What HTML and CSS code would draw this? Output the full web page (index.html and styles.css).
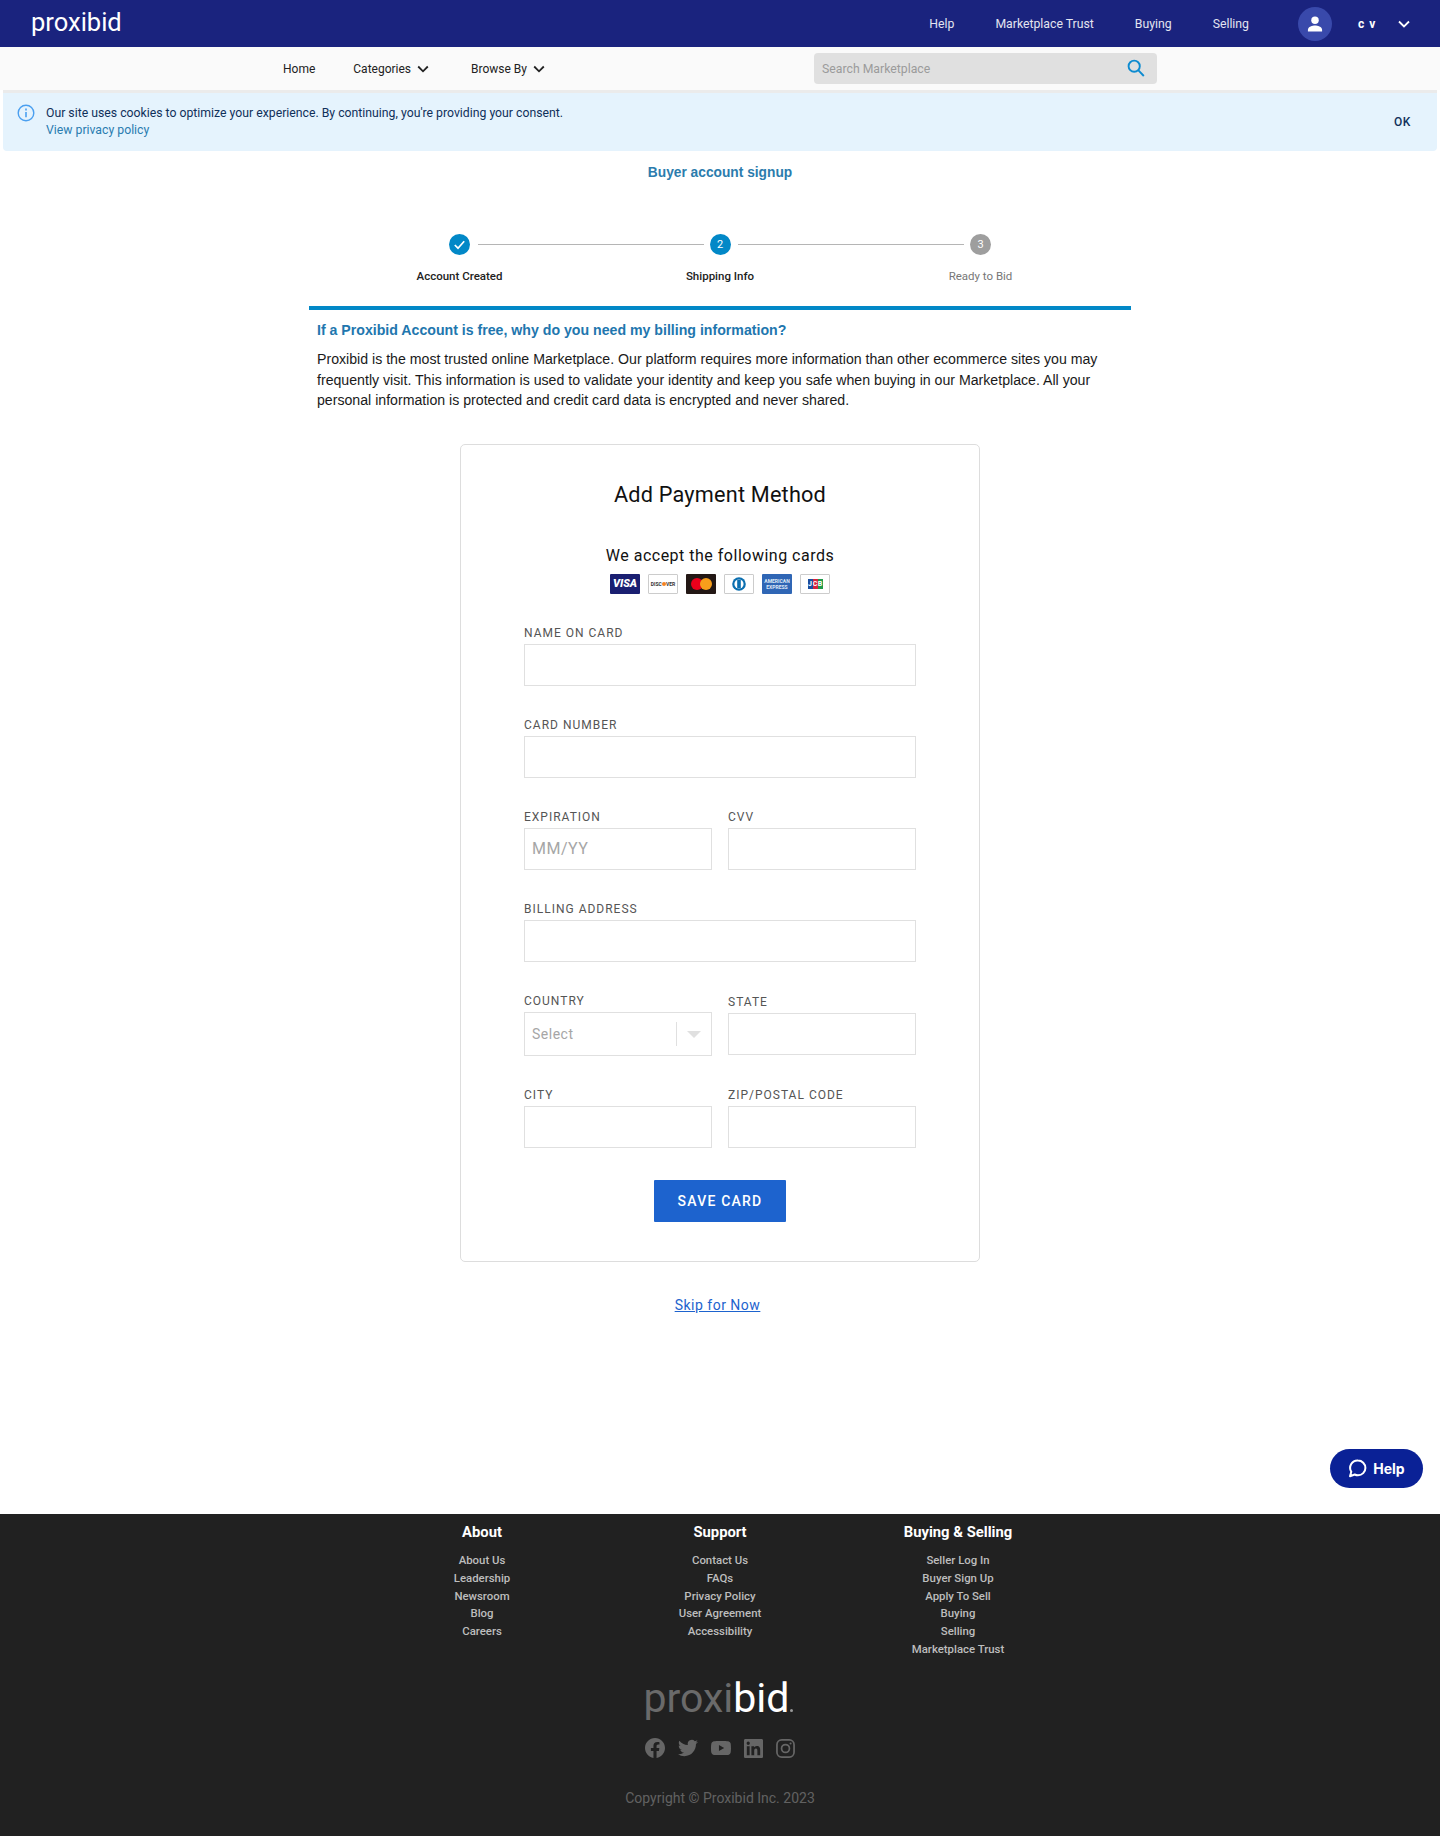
FILE: index.html
```html
<!DOCTYPE html>
<html lang="en">
<head>
  <meta charset="UTF-8">
  <meta name="viewport" content="width=device-width, initial-scale=1.0">
  <title>Proxibid - Add Payment Method</title>
  <link rel="stylesheet" href="styles.css">
</head>
<body>
  <header class="topbar">
    <a class="logo" href="#">proxibid</a>
    <nav class="topnav">
      <a href="#">Help</a>
      <a href="#">Marketplace Trust</a>
      <a href="#">Buying</a>
      <a href="#">Selling</a>
    </nav>
    <div class="account">
      <span class="avatar">
        <svg width="20" height="20" viewBox="0 0 24 24" fill="#fff"><circle cx="12" cy="7.5" r="4.5"/><path d="M3.5 21v-2.2c0-3.4 5.6-5 8.5-5s8.5 1.6 8.5 5V21z"/></svg>
      </span>
      <span class="account-name">c v</span>
      <svg class="account-caret" width="14" height="14" viewBox="0 0 14 14" fill="none" stroke="#fff" stroke-width="1.8"><path d="M2 4.5l5 5 5-5"/></svg>
    </div>
  </header>

  <div class="subnav">
    <a class="home-link" href="#">Home</a>
    <a class="cat-link" href="#">Categories
      <svg width="12" height="12" viewBox="0 0 12 12" fill="none" stroke="#222" stroke-width="1.8"><path d="M1.2 3.5L6 8.3l4.8-4.8"/></svg>
    </a>
    <a class="cat-link" href="#">Browse By
      <svg width="12" height="12" viewBox="0 0 12 12" fill="none" stroke="#222" stroke-width="1.8"><path d="M1.2 3.5L6 8.3l4.8-4.8"/></svg>
    </a>
    <div class="search">
      <input type="text" placeholder="Search Marketplace">
      <svg width="18" height="18" viewBox="0 0 18 18" fill="none" stroke="#0d8bd0" stroke-width="1.9"><circle cx="7.2" cy="7.2" r="5.6"/><path d="M11.2 11.2l5.6 5.8"/></svg>
    </div>
  </div>

  <div class="cookie">
    <svg class="cookie-icon" width="18" height="18" viewBox="0 0 18 18" fill="none" stroke="#4a9ff0" stroke-width="1.4"><circle cx="9" cy="9" r="7.8"/><path d="M9 8v5.2" stroke-width="1.6"/><path d="M9 4.6v1.8" stroke-width="1.6"/></svg>
    <div class="cookie-text">
      <p>Our site uses cookies to optimize your experience. By continuing, you're providing your consent.</p>
      <a href="#">View privacy policy</a>
    </div>
    <button class="cookie-ok">OK</button>
  </div>

  <main class="main">
    <h1 class="signup-title">Buyer account signup</h1>

    <div class="content">
      <div class="steps">
        <div class="step done">
          <span class="dot"><svg width="13" height="13" viewBox="0 0 13 13" fill="none" stroke="#fff" stroke-width="1.7"><path d="M1.8 7l3.2 3.2 6.2-7"/></svg></span>
          <span class="step-label">Account Created</span>
        </div>
        <div class="step active">
          <span class="dot">2</span>
          <span class="step-label">Shipping Info</span>
        </div>
        <div class="step todo">
          <span class="dot">3</span>
          <span class="step-label">Ready to Bid</span>
        </div>
      </div>

      <div class="why">
        <h2>If a Proxibid Account is free, why do you need my billing information?</h2>
        <p>Proxibid is the most trusted online Marketplace. Our platform requires more information than other ecommerce sites you may frequently visit. This information is used to validate your identity and keep you safe when buying in our Marketplace. All your personal information is protected and credit card data is encrypted and never shared.</p>
      </div>
    </div>

    <form class="card">
      <h2 class="card-title">Add Payment Method</h2>
      <p class="accept">We accept the following cards</p>
      <div class="brands">
        <span class="brand visa">VISA</span>
        <span class="brand discover">DISC<i></i>VER</span>
        <span class="brand mc"><i class="red"></i><i class="orange"></i></span>
        <span class="brand diners"><svg width="16" height="14" viewBox="0 0 16 14"><circle cx="8" cy="7" r="6.8" fill="#0b6fb0"/><circle cx="8" cy="7" r="4.6" fill="#fff"/><rect x="6.2" y="2.8" width="3.6" height="8.4" fill="#0b6fb0"/></svg></span>
        <span class="brand amex">AMERICAN<br>EXPRESS</span>
        <span class="brand jcb"><b class="j">J</b><b class="c">C</b><b class="g">B</b></span>
      </div>

      <div class="field">
        <label>NAME ON CARD</label>
        <input type="text">
      </div>
      <div class="field">
        <label>CARD NUMBER</label>
        <input type="text">
      </div>
      <div class="row">
        <div class="field">
          <label>EXPIRATION</label>
          <input type="text" placeholder="MM/YY">
        </div>
        <div class="field">
          <label>CVV</label>
          <input type="text">
        </div>
      </div>
      <div class="field">
        <label>BILLING ADDRESS</label>
        <input type="text">
      </div>
      <div class="row row-center">
        <div class="field">
          <label>COUNTRY</label>
          <div class="select">
            <span class="select-value">Select</span>
            <span class="select-arrow"></span>
          </div>
        </div>
        <div class="field">
          <label>STATE</label>
          <input type="text">
        </div>
      </div>
      <div class="row">
        <div class="field">
          <label>CITY</label>
          <input type="text">
        </div>
        <div class="field">
          <label>ZIP/POSTAL CODE</label>
          <input type="text">
        </div>
      </div>
      <button class="save" type="button">SAVE CARD</button>
    </form>

    <div class="skip"><a href="#">Skip for Now</a></div>

    <button class="help-btn">
      <svg width="19" height="19" viewBox="0 0 19 19" fill="none" stroke="#fff" stroke-width="2"><path d="M10 1.5a7.4 7.4 0 0 1 0 14.8c-1.2 0-2.3-.3-3.3-.8L2 17.2l1.3-4.4A7.4 7.4 0 0 1 10 1.5z" stroke-linejoin="round"/></svg>
      Help
    </button>
  </main>

  <footer class="footer">
    <div class="footer-cols">
      <div class="footer-col">
        <h3>About</h3>
        <a href="#">About Us</a>
        <a href="#">Leadership</a>
        <a href="#">Newsroom</a>
        <a href="#">Blog</a>
        <a href="#">Careers</a>
      </div>
      <div class="footer-col">
        <h3>Support</h3>
        <a href="#">Contact Us</a>
        <a href="#">FAQs</a>
        <a href="#">Privacy Policy</a>
        <a href="#">User Agreement</a>
        <a href="#">Accessibility</a>
      </div>
      <div class="footer-col">
        <h3>Buying &amp; Selling</h3>
        <a href="#">Seller Log In</a>
        <a href="#">Buyer Sign Up</a>
        <a href="#">Apply To Sell</a>
        <a href="#">Buying</a>
        <a href="#">Selling</a>
        <a href="#">Marketplace Trust</a>
      </div>
    </div>
    <div class="footer-logo">proxi<span>bid</span><em></em></div>
    <div class="social">
      <svg width="20" height="20" viewBox="0 0 24 24" fill="#666"><path d="M24 12.073c0-6.627-5.373-12-12-12s-12 5.373-12 12c0 5.99 4.388 10.954 10.125 11.854v-8.385H7.078v-3.47h3.047V9.43c0-3.007 1.792-4.669 4.533-4.669 1.312 0 2.686.235 2.686.235v2.953H15.83c-1.491 0-1.956.925-1.956 1.874v2.25h3.328l-.532 3.47h-2.796v8.385C19.612 23.027 24 18.062 24 12.073z"/></svg>
      <svg width="20" height="20" viewBox="0 0 24 24" fill="#666"><path d="M23.953 4.57a10 10 0 01-2.825.775 4.958 4.958 0 002.163-2.723c-.951.555-2.005.959-3.127 1.184a4.92 4.92 0 00-8.384 4.482C7.69 8.095 4.067 6.13 1.64 3.162a4.822 4.822 0 00-.666 2.475c0 1.71.87 3.213 2.188 4.096a4.904 4.904 0 01-2.228-.616v.06a4.923 4.923 0 003.946 4.827 4.996 4.996 0 01-2.212.085 4.936 4.936 0 004.604 3.417 9.867 9.867 0 01-6.102 2.105c-.39 0-.779-.023-1.17-.067a13.995 13.995 0 007.557 2.209c9.053 0 13.998-7.496 13.998-13.985 0-.21 0-.42-.015-.63A9.935 9.935 0 0024 4.59z"/></svg>
      <svg width="20" height="20" viewBox="0 0 24 24" fill="#666"><path d="M23.498 6.186a3.016 3.016 0 0 0-2.122-2.136C19.505 3.545 12 3.545 12 3.545s-7.505 0-9.377.505A3.017 3.017 0 0 0 .502 6.186C0 8.07 0 12 0 12s0 3.93.502 5.814a3.016 3.016 0 0 0 2.122 2.136c1.871.505 9.376.505 9.376.505s7.505 0 9.377-.505a3.015 3.015 0 0 0 2.122-2.136C24 15.93 24 12 24 12s0-3.93-.502-5.814zM9.545 15.568V8.432L15.818 12l-6.273 3.568z"/></svg>
      <svg width="19" height="19" viewBox="0 0 24 24" fill="#666"><path d="M20.447 20.452h-3.554v-5.569c0-1.328-.027-3.037-1.852-3.037-1.853 0-2.136 1.445-2.136 2.939v5.667H9.351V9h3.414v1.561h.046c.477-.9 1.637-1.85 3.37-1.85 3.601 0 4.267 2.37 4.267 5.455v6.286zM5.337 7.433a2.062 2.062 0 0 1-2.063-2.065 2.064 2.064 0 1 1 2.063 2.065zm1.782 13.019H3.555V9h3.564v11.452zM22.225 0H1.771C.792 0 0 .774 0 1.729v20.542C0 23.227.792 24 1.771 24h20.451C23.2 24 24 23.227 24 22.271V1.729C24 .774 23.2 0 22.222 0h.003z"/></svg>
      <svg width="19" height="19" viewBox="0 0 24 24" fill="none" stroke="#666" stroke-width="2.2"><rect x="1.2" y="1.2" width="21.6" height="21.6" rx="6"/><circle cx="12" cy="12" r="5"/><circle cx="18.4" cy="5.6" r="1.3" fill="#666" stroke="none"/></svg>
    </div>
    <p class="copyright">Copyright &copy; Proxibid Inc. 2023</p>
  </footer>
</body>
</html>
```

FILE: styles.css
```css
* {
  box-sizing: border-box;
}
body {
  margin: 0;
  background: #fff;
  color: #222;
  font-family: Roboto, 'Liberation Sans', Arial, sans-serif;
}
a {
  text-decoration: none;
  color: inherit;
}
.topbar {
  height: 47px;
  background: #1a237e;
  display: flex;
  align-items: center;
  padding-left: 31px;
  color: #fff;
}
.logo {
  font-weight: 400;
  font-size: 25.5px;
  line-height: 47px;
  color: #fff;
  margin-top: -3px;
}
.topnav {
  margin-left: auto;
  display: flex;
  gap: 41px;
  font-size: 12.25px;
  color: #e3e4f0;
}
.account {
  display: flex;
  align-items: center;
  margin-left: 49px;
  width: 142px;
}
.avatar {
  width: 34px;
  height: 34px;
  border-radius: 50%;
  background: #3949ab;
  display: flex;
  align-items: center;
  justify-content: center;
}
.account-name {
  margin-left: 26px;
  font-size: 12px;
  font-weight: 700;
  letter-spacing: 1px;
}
.account-caret {
  margin-left: 21px;
}
.subnav {
  height: 43px;
  background: #fafafa;
  display: flex;
  align-items: center;
  padding: 0 283px;
  font-size: 12px;
  color: #222;
}
.subnav a svg {
  margin-left: 3px;
  vertical-align: -2px;
}
.home-link {
  margin-right: 38px;
}
.cat-link {
  margin-right: 42px;
}
.search {
  position: relative;
  margin-left: auto;
  width: 343px;
  height: 31px;
}
.search input {
  width: 100%;
  height: 100%;
  border: none;
  border-radius: 4px;
  background: #e0e0e0;
  padding: 0 8px;
  font-family: inherit;
  font-size: 12.25px;
}
.search input::placeholder {
  color: #9b9b9b;
}
.search svg {
  position: absolute;
  right: 12px;
  top: 6px;
}
.cookie {
  height: 61px;
  background: #e5f3fd;
  border-top: 3px solid #ebebeb;
  border-radius: 0 0 4px 4px;
  margin: 0 3px;
  display: flex;
  padding: 12px 26px 0 14px;
  font-size: 12.25px;
  line-height: 17px;
  color: #10305a;
}
.cookie p {
  margin: 0;
}
.cookie a {
  color: #2a7cb0;
}
.cookie-icon {
  margin-right: 11px;
  margin-top: -1px;
}
.cookie-ok {
  margin-left: auto;
  margin-top: 5px;
  height: 24px;
  padding: 0;
  border: none;
  background: none;
  font-family: inherit;
  font-size: 12px;
  font-weight: 500;
  letter-spacing: 0.6px;
  color: #10305a;
}
.main {
  position: relative;
  min-height: 1363px;
  overflow: hidden;
}
.signup-title {
  margin: 13px 0 0;
  font-family: 'Liberation Sans', Arial, sans-serif;
  font-size: 13.75px;
  line-height: 18px;
  font-weight: 700;
  text-align: center;
  color: #2b7cad;
}
.content {
  width: 822px;
  margin: 0 auto;
}
.steps {
  display: flex;
  justify-content: center;
  margin-top: 52px;
  padding-bottom: 22px;
  border-bottom: 4px solid #0288c7;
}
.step {
  position: relative;
  width: 260.5px;
  display: flex;
  flex-direction: column;
  align-items: center;
  font-size: 11.5px;
  color: #222;
}
.step .dot {
  width: 21px;
  height: 21px;
  border-radius: 50%;
  background: #0288c7;
  color: #fff;
  font-size: 11px;
  display: flex;
  align-items: center;
  justify-content: center;
}
.step.todo .dot {
  background: #9e9e9e;
}
.step:not(:last-child)::after {
  content: "";
  position: absolute;
  top: 10px;
  left: calc(50% + 18px);
  width: 226px;
  height: 1px;
  background: #b5b5b5;
}
.step-label {
  margin-top: 13px;
  line-height: 16px;
  font-weight: 500;
}
.step.todo .step-label {
  color: #777;
  font-weight: 400;
}
.why {
  padding: 10px 8px 0;
}
.why h2 {
  margin: 0;
  font-family: 'Liberation Sans', Arial, sans-serif;
  font-size: 14.15px;
  line-height: 20px;
  font-weight: 700;
  color: #2176ae;
}
.why p {
  margin: 9px 0 0;
  font-family: 'Liberation Sans', Arial, sans-serif;
  font-size: 14.15px;
  line-height: 20.5px;
  color: #1a1a1a;
}
.card {
  width: 520px;
  margin: 33px auto 0;
  padding: 35px 63px 39px;
  border: 1px solid #ddd;
  border-radius: 5px;
}
.card-title {
  margin: 0;
  font-size: 21.7px;
  line-height: 30px;
  font-weight: 400;
  letter-spacing: 0.2px;
  text-align: center;
  color: #111;
}
.accept {
  margin: 36px 0 0;
  font-size: 16px;
  line-height: 20px;
  letter-spacing: 0.5px;
  text-align: center;
  color: #111;
}
.brands {
  display: flex;
  justify-content: center;
  gap: 8px;
  margin: 8px 0 30px;
}
.brand {
  width: 30px;
  height: 20px;
  border-radius: 1px;
  display: flex;
  align-items: center;
  justify-content: center;
  overflow: hidden;
}
.visa {
  background: #1a1f71;
  color: #fff;
  font-size: 11px;
  font-weight: 900;
  font-style: italic;
}
.discover {
  border: 1px solid #ccc;
  font-size: 5px;
  font-weight: 700;
  color: #333;
}
.discover i {
  width: 4px;
  height: 4px;
  border-radius: 50%;
  background: #f48120;
}
.mc {
  background: #231815;
}
.mc i {
  width: 12px;
  height: 12px;
  border-radius: 50%;
}
.mc .red {
  background: #eb001b;
}
.mc .orange {
  background: #f79e1b;
  margin-left: -3px;
}
.diners {
  border: 1px solid #ccc;
}
.amex {
  background: #2f66b5;
  color: #dfe9f7;
  font-size: 5px;
  font-weight: 700;
  line-height: 6px;
  text-align: center;
}
.jcb {
  border: 1px solid #ccc;
  gap: 0;
  font-size: 7px;
  color: #fff;
}
.jcb b {
  width: 5px;
  height: 10px;
  display: flex;
  align-items: center;
  justify-content: center;
}
.jcb .j {
  background: #1a4fa0;
}
.jcb .c {
  background: #d5243c;
}
.jcb .g {
  background: #1f9b4a;
}
.field {
  margin-bottom: 30px;
}
.field label {
  display: block;
  padding-top: 1px;
  font-size: 12px;
  line-height: 16px;
  letter-spacing: 1px;
  margin-bottom: 3px;
  color: #555;
}
.field input {
  display: block;
  width: 100%;
  height: 42px;
  border: 1px solid #e0e0e0;
  background: #fff;
  padding: 0 7px;
  font-family: inherit;
  font-size: 16px;
  letter-spacing: 0.5px;
}
.field input::placeholder {
  color: #a6a6a6;
}
.row {
  display: grid;
  grid-template-columns: 188px 188px;
  gap: 16px;
}
.row-center {
  align-items: center;
}
.select {
  height: 44px;
  border: 1px solid #e0e0e0;
  display: flex;
  align-items: center;
  padding-left: 7px;
  font-size: 14px;
  letter-spacing: 0.5px;
  color: #a6a6a6;
}
.select-arrow {
  position: relative;
  margin-left: auto;
  width: 35px;
  height: 24px;
  border-left: 1px solid #e0e0e0;
}
.select-arrow::after {
  content: "";
  position: absolute;
  left: 10px;
  top: 9px;
  border-left: 7px solid transparent;
  border-right: 7px solid transparent;
  border-top: 7px solid #e0e0e0;
}
.save {
  display: block;
  width: 132px;
  height: 42px;
  margin: 2px auto 0;
  border: none;
  background: #1d63ce;
  color: #fff;
  font-family: inherit;
  font-size: 14px;
  font-weight: 500;
  letter-spacing: 1.2px;
  border-radius: 1px;
}
.skip {
  margin-top: 34px;
  padding-right: 5px;
  text-align: center;
  font-size: 14px;
  line-height: 18px;
  letter-spacing: 0.5px;
}
.skip a {
  color: #1d63ce;
  text-decoration: underline;
}
.help-btn {
  position: absolute;
  right: 17px;
  bottom: 26px;
  width: 93px;
  height: 39px;
  border: none;
  border-radius: 20px;
  background: #0a2196;
  color: #fff;
  font-family: Inter, sans-serif;
  font-size: 14px;
  font-weight: 700;
  display: flex;
  align-items: center;
  justify-content: center;
  gap: 6px;
}
.footer {
  height: 322px;
  background: #212121;
  display: flex;
  flex-direction: column;
  align-items: center;
  overflow: hidden;
}
.footer-cols {
  display: grid;
  grid-template-columns: repeat(3, 238px);
  height: 150px;
  padding-top: 9px;
  text-align: center;
}
.footer-col h3 {
  margin: 0 0 11px;
  font-size: 14.8px;
  line-height: 18px;
  font-weight: 700;
  color: #fff;
}
.footer-col a {
  display: block;
  font-size: 11.4px;
  font-weight: 500;
  line-height: 17.8px;
  color: #bdbdbd;
}
.footer-logo {
  position: relative;
  margin: 9px 7px 0 0;
  font-weight: 400;
  font-size: 41px;
  line-height: 50px;
  color: #6a6a6a;
}
.footer-logo span {
  color: #fff;
}
.footer-logo em {
  position: absolute;
  right: -4px;
  bottom: 11px;
  width: 3px;
  height: 3px;
  border-radius: 50%;
  background: #999;
}
.social {
  display: flex;
  align-items: center;
  gap: 13px;
  margin-top: 15px;
}
.copyright {
  margin: 31px 0 0;
  font-size: 14px;
  line-height: 18px;
  color: #616161;
}
```
